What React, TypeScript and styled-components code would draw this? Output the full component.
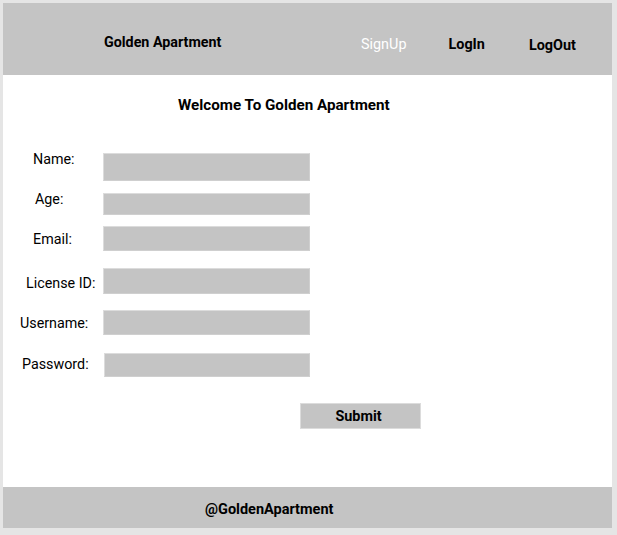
import React from "react";
import styled, { createGlobalStyle } from "styled-components";

const Global = createGlobalStyle`
  html, body { margin: 0; padding: 0; background: #e5e5e5; }
  body { font-family: Roboto, "Liberation Sans", sans-serif; }
  * { box-sizing: border-box; }
`;

const Page = styled.div`
  padding: 3px 5px 7px 3px;
  width: 617px;
  height: 535px;
`;

const Frame = styled.div`
  width: 609px;
  height: 525px;
  background: #ffffff;
  display: flex;
  flex-direction: column;
`;

const Header = styled.header`
  height: 72px;
  background: #c4c4c4;
  display: flex;
  align-items: flex-start;
  padding-left: 101px;
  flex-shrink: 0;
`;

const Brand = styled.div`
  margin-top: 31px;
  font-size: 14.3px;
  line-height: 16px;
  font-weight: 700;
  color: #000;
  width: 257px;
`;

const Nav = styled.nav`
  display: flex;
  align-items: flex-start;
`;

const NavLink = styled.a<{ $active?: boolean; $ml: number; $mt: number }>`
  margin-left: ${(p) => p.$ml}px;
  margin-top: ${(p) => p.$mt}px;
  font-size: 14.4px;
  line-height: 16px;
  font-weight: ${(p) => (p.$active ? 400 : 700)};
  color: ${(p) => (p.$active ? "#ffffff" : "#000000")};
  text-decoration: none;
`;

const Main = styled.main`
  flex: 1;
  display: flex;
  flex-direction: column;
`;

const Title = styled.h1`
  margin: 22px 0 0 175px;
  font-size: 15.2px;
  line-height: 17px;
  font-weight: 700;
  color: #000;
`;

const Form = styled.form`
  display: flex;
  flex-direction: column;
`;

const Row = styled.div<{ $mt: number }>`
  display: grid;
  grid-template-columns: 100px 208px;
  align-items: start;
  margin-top: ${(p) => p.$mt}px;
`;

const Label = styled.label<{ $x: number; $dy: number }>`
  padding-left: ${(p) => p.$x}px;
  margin-top: ${(p) => p.$dy}px;
  font-size: 14.3px;
  line-height: 16px;
  color: #000;
  white-space: nowrap;
`;

const Field = styled.input<{ $h: number; $dy: number; $dx: number }>`
  height: ${(p) => p.$h}px;
  margin: ${(p) => p.$dy}px 0 0 ${(p) => p.$dx}px;
  width: ${(p) => 207 - p.$dx}px;
  background: #c4c4c4;
  border: 1px solid #dcdcdc;
  border-right-color: #cfcfcf;
  border-bottom-color: #cfcfcf;
  padding: 0 6px;
  font-family: inherit;
  outline: none;
`;

const Submit = styled.button`
  margin: 26px 0 0 297px;
  width: 121px;
  height: 26px;
  background: #c4c4c4;
  border: 1px solid #dcdcdc;
  font-family: inherit;
  font-size: 14.4px;
  font-weight: 700;
  color: #000;
  padding: 0 4px 0 0;
  cursor: pointer;
`;

const Footer = styled.footer`
  height: 41px;
  background: #c4c4c4;
  display: flex;
  align-items: center;
  padding: 3px 0 0 202px;
  font-size: 14.5px;
  font-weight: 700;
  color: #000;
  flex-shrink: 0;
`;

type RowDef = {
  label: string;
  mt: number;
  lx: number;
  ldy: number;
  idy: number;
  h: number;
  dx?: number;
  type?: string;
};

const rows: RowDef[] = [
  { label: "Name:", mt: 37, lx: 30, ldy: 0, idy: 2, h: 28 },
  { label: "Age:", mt: 10, lx: 32, ldy: 0, idy: 2, h: 22 },
  { label: "Email:", mt: 11, lx: 30, ldy: 5, idy: 0, h: 25 },
  { label: "License ID:", mt: 17, lx: 23, ldy: 7, idy: 0, h: 26 },
  { label: "Username:", mt: 16, lx: 17, ldy: 5, idy: 0, h: 25 },
  { label: "Password:", mt: 18, lx: 19, ldy: 3, idy: 0, h: 24, dx: 1, type: "password" },
];

export default function App() {
  return (
    <>
      <Global />
      <Page>
        <Frame>
          <Header>
            <Brand>Golden Apartment</Brand>
            <Nav>
              <NavLink $active $ml={0} $mt={34}>SignUp</NavLink>
              <NavLink $ml={42} $mt={34}>LogIn</NavLink>
              <NavLink $ml={44} $mt={35}>LogOut</NavLink>
            </Nav>
          </Header>
          <Main>
            <Title>Welcome To Golden Apartment</Title>
            <Form onSubmit={(e) => e.preventDefault()}>
              {rows.map((r) => (
                <Row key={r.label} $mt={r.mt}>
                  <Label $x={r.lx} $dy={r.ldy}>{r.label}</Label>
                  <Field type={r.type ?? "text"} $h={r.h} $dy={r.idy} $dx={r.dx ?? 0} />
                </Row>
              ))}
              <Submit type="submit">Submit</Submit>
            </Form>
          </Main>
          <Footer>@GoldenApartment</Footer>
        </Frame>
      </Page>
    </>
  );
}
